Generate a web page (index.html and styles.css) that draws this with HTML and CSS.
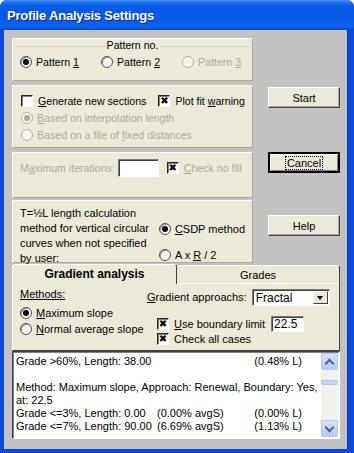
FILE: index.html
```html
<!DOCTYPE html>
<html lang="en">
<head>
  <meta charset="UTF-8">
  <title>Profile Analysis Settings</title>
  <link rel="stylesheet" href="styles.css">
</head>
<body>
<div class="window">
  <div class="titlebar">Profile Analysis Settings</div>
  <div class="client">
    <div class="top">
      <div class="left">
        <div class="panel p1">
          <div class="group">
            <div class="legend"><span>Pattern no.</span></div>
            <div class="row pattern-row">
              <label class="opt"><span class="radio on"></span><span>Pattern <u>1</u></span></label>
              <label class="opt"><span class="radio"></span><span>Pattern <u>2</u></span></label>
              <label class="opt dis"><span class="radio"></span><span>Pattern <u>3</u></span></label>
            </div>
          </div>
        </div>
        <div class="panel p2">
          <div class="row">
            <label class="opt gen"><span class="check"></span><span><u>G</u>enerate new sections</span></label>
            <label class="opt"><span class="check on">&#x2716;</span><span>Plot fit <u>w</u>arning</span></label>
          </div>
          <label class="opt dis line"><span class="radio on"></span><span><u>B</u>ased on interpolation length</span></label>
          <label class="opt dis line"><span class="radio"></span><span>Based on a file of <u>f</u>ixed distances</span></label>
        </div>
        <div class="panel p3">
          <div class="row">
            <span class="dis nw">M<u>a</u>ximum iterations:</span>
            <span class="edit iter"></span>
            <label class="opt dis"><span class="check on">&#x2716;</span><span><u>C</u>heck no fill</span></label>
          </div>
        </div>
        <div class="panel p4">
          <div class="desc">T=½L length calculation method for vertical circular curves when not specified by user:</div>
          <div class="methods">
            <label class="opt"><span class="radio on"></span><span><u>C</u>SDP method</span></label>
            <label class="opt"><span class="radio"></span><span>A x <u>R</u> / 2</span></label>
          </div>
        </div>
      </div>
      <div class="buttons">
        <button class="btn start">Start</button>
        <button class="btn cancel"><span class="focus">Cancel</span></button>
        <button class="btn help">Help</button>
      </div>
    </div>

    <div class="tabs">
      <div class="tab-head">
        <div class="tab active">Gradient analysis</div>
        <div class="tab">Grades</div>
      </div>
      <div class="tab-body">
        <div class="col-a">
          <div class="caption"><u>Methods:</u></div>
          <label class="opt"><span class="radio on"></span><span><u>M</u>aximum slope</span></label>
          <label class="opt"><span class="radio"></span><span><u>N</u>ormal average slope</span></label>
        </div>
        <div class="col-b">
          <div class="row">
            <span class="nw"><u>G</u>radient approachs:</span>
            <span class="combo"><span class="combo-text">Fractal</span><span class="combo-btn"></span></span>
          </div>
          <div class="row boundary">
            <label class="opt"><span class="check on">&#x2716;</span><span><u>U</u>se boundary limit</span></label>
            <span class="edit limit">22.5</span>
          </div>
          <label class="opt cases"><span class="check on">&#x2716;</span><span>Check all cases</span></label>
        </div>
      </div>
    </div>

    <div class="list">
      <div class="lines">
        <div class="ln"><span class="c1">Grade &gt;60%, Length: 38.00</span><span class="c3">(0.48% L)</span></div>
        <div class="ln">&nbsp;</div>
        <div class="ln">Method: Maximum slope, Approach: Renewal, Boundary: Yes,</div>
        <div class="ln">at: 22.5</div>
        <div class="ln"><span class="c1">Grade &lt;=3%, Length: 0.00</span><span class="c2">(0.00% avgS)</span><span class="c3">(0.00% L)</span></div>
        <div class="ln"><span class="c1">Grade &lt;=7%, Length: 90.00</span><span class="c2">(6.69% avgS)</span><span class="c3">(1.13% L)</span></div>
      </div>
      <div class="vscroll">
        <span class="sb-btn up"></span>
        <span class="sb-track"><span class="sb-thumb"></span></span>
        <span class="sb-btn down"></span>
      </div>
    </div>
  </div>
</div>
</body>
</html>
```

FILE: styles.css
```css
* { box-sizing: border-box; }
body { margin: 0; background: #fff; font-family: "Liberation Sans", Arial, sans-serif; font-size: 10.6px; color: #000; }
u { text-decoration: underline; text-underline-offset: 1px; }
.nw { white-space: nowrap; }

.window { width: 354px; height: 453px; display: flex; flex-direction: column; background: #0b4ad8; border-radius: 7px 7px 0 0; overflow: hidden; }
.titlebar { height: 30px; flex: none; padding: 0 0 0 7px; display: flex; align-items: center; color: #fff; font-weight: bold; font-size: 13px; letter-spacing: -0.2px; text-shadow: 1px 1px 0 #0a2a8a;
  background: linear-gradient(to bottom, #3f8cf3 0, #2b78f2 2px, #0a5fe8 5px, #0557e3 40%, #0a5fea 80%, #0d63f0 90%, #0446c9 100%); }
.client { flex: 1; margin: 0 6px 4px 4px; background: #c2c2c2; padding: 8px 8px 0 8px; display: flex; flex-direction: column; border-right: 1px solid #0a2fb0; }

.top { display: flex; }
.left { width: 241px; display: flex; flex-direction: column; }
.panel { background: #ece9d8; border: 1px solid; border-color: #fdfdfb #aca899 #aca899 #fdfdfb; }
.p1 { height: 43px; padding: 0 3px; }
.p2 { height: 63px; margin-top: 4px; padding: 9px 8px 0; }
.p3 { height: 46px; margin-top: 4px; padding: 6px 7px 0; }
.p4 { height: 63px; margin-top: 2px; padding: 5px 7px 0; display: flex; }

.row { display: flex; align-items: center; }
.opt { display: flex; align-items: center; white-space: nowrap; }
.dis { color: #aca899; }
.line { margin-top: 4px; height: 13px; }

.group { margin-top: 7px; border-top: 1px solid #d0d0bf; position: relative; }
.legend { position: absolute; left: 0; right: 0; top: -8px; text-align: center; }
.legend span { background: #ece9d8; padding: 0 2px; }
.pattern-row { padding: 9px 0 0 4px; }
.pattern-row .opt { margin-right: 22px; }

.radio { width: 12px; height: 12px; border-radius: 50%; border: 1px solid #4b4b4b; background: #fff; margin-right: 4px; display: inline-flex; align-items: center; justify-content: center; flex: none;
  box-shadow: inset 1px 1px 0 #9a9a9a; }
.radio.on::after { content: ""; width: 6px; height: 6px; border-radius: 50%; background: #000; }
.dis .radio { border-color: #b4b2a6; box-shadow: none; background: #f4f3ee; }
.dis .radio.on::after { background: #aca899; }

.check { width: 12px; height: 12px; border: 1px solid; border-color: #222 #fff #fff #222; box-shadow: inset 1px 1px 0 #808080; background: #fff; margin-right: 5px; flex: none;
  display: inline-flex; align-items: center; justify-content: center; font-size: 10px; line-height: 1; color: #000; font-family: "DejaVu Sans", sans-serif; }
.gen { margin-right: 12px; }

.edit { background: #fff; border: 1px solid; border-color: #7a7a7a #fff #fff #7a7a7a; box-shadow: inset 1px 1px 0 #404040; display: inline-block; }
.iter { width: 41px; height: 18px; margin: 0 8px 0 3px; flex: none; }

.desc { width: 140px; line-height: 15px; color: #000; font-size: 11px; }
.methods { display: flex; flex-direction: column; gap: 14px; margin: 17px 0 0 6px; font-size: 11px; }

.buttons { display: flex; flex-direction: column; margin-left: 15px; padding-top: 49px; }
.btn { width: 72px; height: 21px; font: inherit; font-size: 11px; background: #ece9d8; color: #000; border: 1px solid; border-color: #fff #404040 #404040 #fff; box-shadow: inset -1px -1px 0 #aca899; padding: 0; }
.cancel { margin-top: 44px; border: 2px solid #000; box-shadow: inset 1px 1px 0 #fff, inset -1px -1px 0 #808080; }
.cancel .focus { border: 1px dotted #000; padding: 0 1px; }
.help { margin-top: 42px; }

.tabs { margin-top: 1px; width: 328px; }
.tab-head { display: flex; height: 20px; align-items: flex-end; }
.tab { height: 19px; flex: 1; background: #ece9d8; border: 1px solid; border-bottom: none; border-color: #fff #404040 #404040 #fff; border-radius: 3px 3px 0 0; text-align: center; line-height: 18px; font-size: 11px; }
.tab.active { height: 20px; flex: none; width: 165px; font-weight: bold; font-size: 12px; border-right-color: #404040; }
.tab:not(.active) { border-left: none; box-shadow: inset 0 -1px 0 #fff; }
.tab-body { height: 67px; background: #ece9d8; border: 1px solid; border-top: none; border-color: #fff #404040 #404040 #fff; display: flex; padding: 4px 7px 0; font-size: 11px; }
.col-a { width: 123px; }
.caption { height: 17px; line-height: 12px; }
.col-a .opt { height: 16px; }
.col-b { flex: 1; padding-left: 4px; }
.combo { width: 78px; height: 17px; margin-left: 5px; background: #fff; border: 1px solid; border-color: #7a7a7a #fff #fff #7a7a7a; box-shadow: inset 1px 1px 0 #404040; display: flex; align-items: center; margin-top: 1px; }
.combo-text { flex: 1; padding-left: 3px; font-size: 12px; }
.combo-btn { width: 15px; height: 13px; margin-right: 1px; background: #ece9d8; border: 1px solid; border-color: #fff #404040 #404040 #fff; position: relative; }
.combo-btn::after { content: ""; position: absolute; left: 3px; top: 4px; border: 3px solid transparent; border-top: 4px solid #000; border-bottom: 0; }
.boundary { margin-top: 10px; padding-left: 10px; }
.limit { width: 33px; height: 16px; margin-left: 6px; padding-left: 2px; font-size: 12px; line-height: 14px; }
.cases { padding-left: 10px; margin-top: 1px; }

.list { height: 88px; width: 328px; background: #fff; border: 1px solid; border-color: #404040 #fff #fff #404040; box-shadow: inset 1px 1px 0 #808080; display: flex; font-size: 11px; }
.lines { flex: 1; padding: 3px 0 0 3px; }
.ln { height: 13px; line-height: 13px; white-space: nowrap; display: flex; }
.c1 { width: 141px; }
.c2 { width: 96px; }
.c3 { margin-left: auto; margin-right: 19px; }
.vscroll { width: 17px; display: flex; flex-direction: column; background: #f3f1ec; margin: 1px 1px 1px 0; }
.sb-btn { height: 17px; border-radius: 2px; background: linear-gradient(#d4e2fc, #b4c9f4); border: 1px solid #b7c9ef; position: relative; }
.sb-btn::after { content: ""; position: absolute; left: 4px; width: 5px; height: 5px; border: solid #4d6185; border-width: 2px 2px 0 0; }
.up::after { top: 6px; transform: rotate(-45deg); }
.down::after { top: 3px; transform: rotate(135deg); }
.sb-track { flex: 1; padding-top: 10px; }
.sb-thumb { display: block; height: 5px; border-radius: 2px; background: #c4d5fb; border: 1px solid #b1c6f2; }
```
